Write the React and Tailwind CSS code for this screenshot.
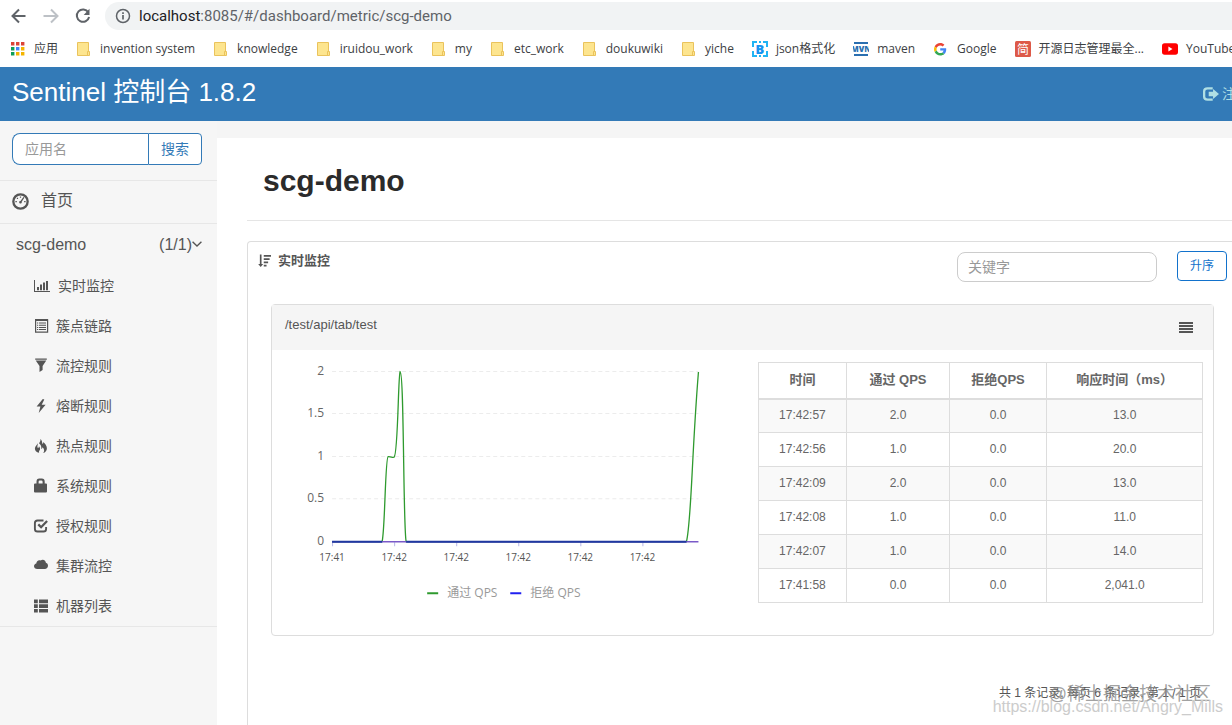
import React from 'react';

const carpeta = 'folder';

const marcadores = [
  { icono: 'apps', texto: '应用' },
  { icono: carpeta, texto: 'invention system' },
  { icono: carpeta, texto: 'knowledge' },
  { icono: carpeta, texto: 'iruidou_work' },
  { icono: carpeta, texto: 'my' },
  { icono: carpeta, texto: 'etc_work' },
  { icono: carpeta, texto: 'doukuwiki' },
  { icono: carpeta, texto: 'yiche' },
  { icono: 'json', texto: 'json格式化' },
  { icono: 'maven', texto: 'maven' },
  { icono: 'google', texto: 'Google' },
  { icono: 'jian', texto: '开源日志管理最全...' },
  { icono: 'youtube', texto: 'YouTube' },
];

const menu = [
  { icono: 'stats', texto: '实时监控', activo: true },
  { icono: 'list', texto: '簇点链路' },
  { icono: 'filter', texto: '流控规则' },
  { icono: 'flash', texto: '熔断规则' },
  { icono: 'fire', texto: '热点规则' },
  { icono: 'lock', texto: '系统规则' },
  { icono: 'check', texto: '授权规则' },
  { icono: 'cloud', texto: '集群流控' },
  { icono: 'thlist', texto: '机器列表' },
];

const metricas = [
  ['17:42:57', '2.0', '0.0', '13.0'],
  ['17:42:56', '1.0', '0.0', '20.0'],
  ['17:42:09', '2.0', '0.0', '13.0'],
  ['17:42:08', '1.0', '0.0', '11.0'],
  ['17:42:07', '1.0', '0.0', '14.0'],
  ['17:41:58', '0.0', '0.0', '2,041.0'],
];

const ejeY = [['2', 22], ['1.5', 64], ['1', 107], ['0.5', 149], ['0', 192]];
const ejeX = [['17:41', 60], ['17:42', 122], ['17:42', 184], ['17:42', 246], ['17:42', 308], ['17:42', 370]];

function IconoMarcador({ tipo }) {
  return (
    <svg className="w-4 h-4 shrink-0" viewBox="0 0 16 16" aria-hidden="true">
      {tipo === 'apps' && (
        <>
          <path fill="#db4437" d="M1 1h3.400v3.400H1zM6 1h3.400v3.400H6zM11 1h3.400v3.400H11z" />
          <path fill="#0f9d58" d="M1 6h3.400v3.400H1zM1 11h3.400v3.400H1z" />
          <path fill="#4285f4" d="M6 6h3.400v3.400H6z" />
          <path fill="#f4b400" d="M11 6h3.400v3.400H11zM6 11h3.400v3.400H6zM11 11h3.400v3.400H11z" />
        </>
      )}
      {tipo === 'folder' && (
        <>
          <path fill="#fde58f" stroke="#eac35c" d="M1.500 1.500h11v9h1v4h-12z" />
          <path fill="none" stroke="#eac35c" d="M11.500 14.500v-4h1.500" />
        </>
      )}
      {tipo === 'json' && (
        <>
          <path fill="none" stroke="#20b4f4" strokeWidth="2" d="M5 1H1v5M1 10v5h4M11 1h4v5M15 10v5h-4M7 1h2M7 15h2" />
          <text x="8" y="12.500" fontSize="13" fontWeight="800" fill="#1593f0" textAnchor="middle">B</text>
        </>
      )}
      {tipo === 'maven' && (
        <>
          <path fill="#2a6fb0" d="M1 1h14v2H1zM1 13h14v2H1z" />
          <text x="8" y="11" fontSize="8" fontWeight="800" fill="#2a6fb0" textAnchor="middle">MVN</text>
        </>
      )}
      {tipo === 'google' && (
        <g transform="translate(1 2) scale(.26)">
          <path fill="#EA4335" d="M24 9.500c3.540 0 6.710 1.220 9.210 3.600l6.850-6.850C35.900 2.380 30.470 0 24 0 14.620 0 6.510 5.380 2.560 13.220l7.980 6.190C12.430 13.720 17.740 9.500 24 9.500z" />
          <path fill="#4285F4" d="M46.980 24.550c0-1.570-.15-3.090-.38-4.550H24v9.020h12.940c-.58 2.960-2.260 5.480-4.780 7.180l7.730 6c4.510-4.180 7.090-10.360 7.090-17.650z" />
          <path fill="#FBBC05" d="M10.530 28.590c-.48-1.450-.76-2.990-.76-4.590s.27-3.140.76-4.590l-7.980-6.190C.92 16.460 0 20.120 0 24c0 3.880.92 7.540 2.560 10.780l7.970-6.190z" />
          <path fill="#34A853" d="M24 48c6.480 0 11.930-2.130 15.890-5.810l-7.730-6c-2.150 1.450-4.920 2.300-8.160 2.300-6.260 0-11.570-4.220-13.470-9.910l-7.980 6.190C6.510 42.620 14.620 48 24 48z" />
        </g>
      )}
      {tipo === 'jian' && (
        <>
          <rect width="16" height="16" rx="1.500" fill="#dd5948" />
          <text x="8" y="12.500" fontSize="12" fill="#fff" textAnchor="middle">简</text>
        </>
      )}
      {tipo === 'youtube' && (
        <>
          <rect y="2.300" width="16" height="11.400" rx="2.600" fill="#f00" />
          <path fill="#fff" d="M6.400 5.600v4.800L10.500 8z" />
        </>
      )}
    </svg>
  );
}

function Glifo({ tipo, className }) {
  return (
    <svg className={className} viewBox="0 0 14 14" fill="currentColor" aria-hidden="true">
      {tipo === 'dashboard' && (
        <>
          <circle cx="7" cy="7" r="5.900" fill="none" stroke="currentColor" strokeWidth="1.900" />
          <path d="M2.800 6.600h1.200v1H2.800zM10 6.600h1.200v1H10zM4 4h1v1H4zM6.500 2.900h1v1.100h-1zM9.400 3.300l.9.500-2.300 3.400a1.100 1.100 0 1 1-1-.7z" />
        </>
      )}
      {tipo === 'stats' && <path d="M0 1h1v11h15v1H0zM3 8h2v3.200H3zM6 5.500h2v5.700H6zM9 3.500h2v7.700H9zM12 2h2v9.200h-2z" />}
      {tipo === 'list' && (
        <>
          <path fill="none" stroke="currentColor" strokeWidth="1.200" d="M1.600.8h12v12.400h-12z" />
          <path d="M1 0h13v2H1zM3 3.500h1.200v1H3zM5 3.500h7v1H5zM3 5.700h1.200v1H3zM5 5.700h7v1H5zM3 7.900h1.200v1H3zM5 7.900h7v1H5zM3 10.100h1.200v1H3zM5 10.100h7v1H5z" />
        </>
      )}
      {tipo === 'filter' && <path d="M1.200-.5h11.600v1.300H1.200zM1.700 1.500h10.600L8.600 7v4L5.500 13V7z" />}
      {tipo === 'flash' && <path d="M8.800 0 2.600 7.600h3.800L4.700 14l6.900-8.300H7.700L10.300.6z" />}
      {tipo === 'fire' && (
        <>
          <path d="M6.300 0c2.600 2 1.300 3.900 2.500 4.900.5-.6.500-1.300.3-2 2 1.400 3.800 4 3.800 6.300 0 2.400-1.500 4.300-3.700 4.800 1.700-2.200 1-4.100-.7-5.800-.2 1-.7 1.500-1.300 1.700.5-2.300-.3-4.200-2.200-5.700C6 2.900 6.800 1.600 6.300 0z" />
          <path d="M3.600 4.200c.4 1.600-.3 2.600-.2 3.700.1.900.8 1.200 1.300.6.300-.4.300-1 .1-1.600 1.500 1.800 1.700 3.500.6 4.700-.5.600-.6 1.300-.3 2.200C2.300 13.200.9 11.600.9 9.400c0-2.300 2.300-3.200 2.700-5.200z" />
        </>
      )}
      {tipo === 'lock' && <path fillRule="evenodd" d="M1 4.500h1.500V2.700Q2.500-.5 5.300-.5h2.500q2.900 0 2.900 3.200v1.800H12q1 0 1 1V12.500q0 1-1 1H1q-1 0-1-1v-7q0-1 1-1zm3.600 0h4V2.700q0-1.300-1.200-1.300H5.800q-1.200 0-1.200 1.300z" />}
      {tipo === 'check' && (
        <>
          <path fill="none" stroke="currentColor" strokeWidth="1.900" d="M9.500 1.500h-6q-2.600 0-2.600 2.600v5.800q0 2.600 2.600 2.600h6q2.600 0 2.600-2.600V8" />
          <path fill="none" stroke="currentColor" strokeWidth="2.300" d="m4.300 5.400 2.800 2.800 6-6.200" />
        </>
      )}
      {tipo === 'cloud' && <path d="M3.200 10C1.400 10 0 8.800 0 7.300c0-1.400 1-2.400 2.300-2.700C2.400 2.500 3.700 1.200 5.400 1.200c.5 0 .9.100 1.300.3.400-.5 1.200-.8 2-.8 1.900 0 3.100 1.400 3.200 3.100 1.300.3 2.100 1.500 2.100 2.900 0 1.900-1.400 3.300-3.200 3.300z" />}
      {tipo === 'thlist' && <path d="M0 .5h3.800v3.700H0zM5 .5h9v3.700H5zM0 5.200h3.800v3.700H0zM5 5.200h9v3.700H5zM0 10h3.800v3.500H0zM5 10h9v3.500H5z" />}
      {tipo === 'sort' && <path d="M2 0h1.800v10.200h1.800L2.900 13.500.2 10.200H2zM6.200.5H14v1.900H6.200zM6.200 4h6.300v1.900H6.200zM6.200 7.500h4.700v1.900H6.200zM6.200 11h3v1.900h-3z" />}
      {tipo === 'justify' && <path d="M0 1h14v2H0zM0 4h14v2H0zM0 7h14v2H0zM0 10h14v2H0z" />}
      {tipo === 'logout' && (
        <>
          <path fill="none" stroke="currentColor" strokeWidth="2" d="M8.500 2H4Q1 2 1 4.500v5Q1 12 4 12h4.500" />
          <path d="M8.800 2.600 14 7l-5.200 4.400V9H5V5h3.800z" />
        </>
      )}
      {tipo === 'chevron' && <path fill="none" stroke="currentColor" strokeWidth="1.900" d="M.8 2.500 7 8.500l6.200-6" />}
    </svg>
  );
}

function BarraNavegador() {
  return (
    <div className="bg-white text-[#3c4043] font-['Open_Sans','Noto_Sans_CJK_SC',sans-serif] whitespace-nowrap">
      <div className="flex items-center h-8 pl-[11px]">
        <button type="button" aria-label="后退" className="mr-4 text-[#5f6368]">
          <svg className="w-4 h-4" viewBox="0 0 16 16" fill="none" stroke="currentColor" strokeWidth="2"><path d="M14.500 8H2M8 1.500 1.500 8 8 14.500" /></svg>
        </button>
        <button type="button" aria-label="前进" className="mr-4 text-[#bdc1c6]">
          <svg className="w-4 h-4" viewBox="0 0 16 16" fill="none" stroke="currentColor" strokeWidth="2"><path d="M.5 8H14M8 1.500 14.500 8 8 14.500" /></svg>
        </button>
        <button type="button" aria-label="重新加载" className="mr-[14px] text-[#5f6368]">
          <svg className="w-4 h-4" viewBox="0 0 16 16" fill="none" stroke="currentColor" strokeWidth="2"><path d="M13.300 4.300A6.200 6.200 0 1 0 14.100 9" /><path d="M14.500.8v6.200H8.700z" fill="currentColor" stroke="none" /></svg>
        </button>
        <div className="flex flex-1 items-center gap-2 h-7 pl-[10px] rounded-l-full bg-[#f1f3f4] text-[15px] font-['Roboto',sans-serif]">
          <svg className="w-4 h-4" viewBox="0 0 16 16" fill="none" stroke="#5f6368" strokeWidth="1.500"><circle cx="8" cy="8" r="6.500" /><path d="M8 7v4.500M8 4.300v1.600" strokeWidth="1.700" /></svg>
          <span className="text-[#5f6368]"><span className="text-[#202124]">localhost</span>:8085/#/dashboard/metric/scg-demo</span>
        </div>
      </div>
      <nav className="flex items-center h-[35px] pb-[2px] pl-[10px] gap-[18px] text-xs">
        {marcadores.map(m => (
          <a key={m.texto} href="#" className="flex items-center gap-2 shrink-0">
            <IconoMarcador tipo={m.icono} />
            {m.texto}
          </a>
        ))}
      </nav>
    </div>
  );
}

function Lateral() {
  return (
    <aside className="w-[217px] shrink-0 bg-[#f6f6f6] text-[#555]">
      <form className="flex h-8 mt-3 mx-3 mb-[15px] w-[190px] text-sm">
        <input type="text" aria-label="应用名" placeholder="应用名" className="flex-1 min-w-0 px-3 bg-white border border-r-0 border-[#337ab7] rounded-l-lg outline-none placeholder:text-[#999]" />
        <button type="button" className="px-3 bg-white border border-[#337ab7] rounded-r text-[#337ab7]">搜索</button>
      </form>
      <a href="#" className="flex items-center gap-3 h-11 pl-3 pb-[2px] border-y border-[#e7e7e7] text-base">
        <Glifo tipo="dashboard" className="w-[17px] h-[17px]" />
        首页
      </a>
      <a href="#" className="flex items-center h-[42px] pl-4 pr-[15px] text-base">
        <span className="flex-1">scg-demo</span>
        (1/1)
        <Glifo tipo="chevron" className="w-[10px] h-[10px]" />
      </a>
      <ul className="border-b border-[#e7e7e7] text-sm">
        {menu.map(m => (
          <li key={m.texto}>
            <a href="#" className={m.activo ? 'flex items-center gap-[10px] h-10 pl-[34px]' : 'flex items-center gap-2 h-10 pl-[34px]'}>
              <Glifo tipo={m.icono} className="w-[14px] h-[14px] overflow-visible" />
              {m.texto}
            </a>
          </li>
        ))}
      </ul>
    </aside>
  );
}

function Grafica() {
  return (
    <svg className="w-full font-['Open_Sans','Noto_Sans_CJK_SC',sans-serif]" viewBox="0 0 470 270" role="img" aria-label="QPS">
      {ejeY.map(([t, y]) => (
        <g key={t}>
          <text x="52" y={y + 3} fontSize="12" fill="#666" textAnchor="end">{t}</text>
          {t !== '0' && <path d={`M60 ${y - 0.5}H426`} stroke="#ececec" strokeDasharray="4 3" />}
        </g>
      ))}
      {ejeX.map(([t, x]) => (
        <g key={x}>
          <path d={`M${x + 0.5} 192v4`} stroke="#b8b8e8" />
          <text x={x} y="211" fontSize="10" fill="#555" textAnchor="middle">{t}</text>
        </g>
      ))}
      <path d="M60 191.500H110C113 178 113 108 116 106.500C118 106 121 108 122 107C126 104 126 24 128 21.500C132 22 131 178 134 191.500H414C419 172 419 108 426 22" fill="none" stroke="#2e9a2e" strokeWidth="1.300" />
      <path d="M60 191.500H426" stroke="#7a5ac8" strokeWidth="1.600" />
      <path d="M60 191.500H110M134 191.500H414" stroke="#2038a0" strokeWidth="2" />
      <path d="M155 243h11" stroke="#2e9a2e" strokeWidth="2" />
      <text x="175" y="247" fontSize="12" fill="#999">通过 QPS</text>
      <path d="M238 243h11" stroke="#2020f0" strokeWidth="2" />
      <text x="258" y="247" fontSize="12" fill="#999">拒绝 QPS</text>
    </svg>
  );
}

function TablaMetricas() {
  return (
    <table className="w-full table-fixed border-collapse border border-[#ddd] text-center text-xs text-[#666]">
      <thead>
        <tr className="h-9 text-[13px]">
          <th className="w-[20%] pb-[2px] border border-b-2 border-[#ddd]">时间</th>
          <th className="w-[23%] pb-[2px] border border-b-2 border-[#ddd]">通过 QPS</th>
          <th className="w-[22%] pb-[2px] border border-b-2 border-[#ddd]">拒绝QPS</th>
          <th className="pb-[2px] border border-b-2 border-[#ddd]">响应时间（ms）</th>
        </tr>
      </thead>
      <tbody>
        {metricas.map(fila => (
          <tr key={fila[0]} className="h-[34px] odd:bg-[#f9f9f9]">
            {fila.map((v, i) => (<td key={i} className="pb-[2px] border border-[#ddd]">{v}</td>))}
          </tr>
        ))}
      </tbody>
    </table>
  );
}

export default function App() {
  return (
    <div className="h-screen overflow-hidden bg-[#f5f5f5] font-['Liberation_Sans','Noto_Sans_CJK_SC',sans-serif]">
      <div className="flex flex-col min-h-full -mr-6">
        <BarraNavegador />

        <header className="flex items-center justify-between h-[54px] pl-3 pr-[6px] bg-[#337ab7]">
          <h1 className="pb-1 text-[26px] text-white">Sentinel 控制台 1.8.2</h1>
          <a href="#" className="flex items-center gap-[3px] text-sm text-[#b0dfe4]">
            <Glifo tipo="logout" className="w-4 h-4" />
            注销
          </a>
        </header>

        <div className="flex flex-1">
          <Lateral />

          <main className="flex flex-col flex-1 mt-[17px] pl-[30px] bg-white">
            <h2 className="px-4 h-[83px] pt-5 border-b border-[#e5e5e5] text-[30px] leading-[46px] font-bold text-[#2b2b2b]">scg-demo</h2>

            <section className="flex flex-col flex-1 mt-5 mr-[18px] border border-b-0 border-[#ddd] rounded-t text-[#555]">
              <div className="flex items-start h-[62px] px-[10px] pt-[9px]">
                <h3 className="flex flex-1 items-center gap-[7px] text-[13px] font-bold">
                  <Glifo tipo="sort" className="w-[13px] h-[14px]" />
                  实时监控
                </h3>
                <input type="text" aria-label="关键字" placeholder="关键字" className="w-[200px] h-[30px] mt-px mr-5 px-[10px] border border-[#ccc] rounded-lg text-sm outline-none placeholder:text-[#999]" />
                <button type="button" className="w-[50px] h-[30px] border border-[#1272cc] rounded text-xs text-[#1272cc]">升序</button>
              </div>

              <article className="mx-[23px] border border-[#ddd] rounded">
                <div className="flex items-center justify-between h-[45px] pl-[13px] pr-5 bg-[#f5f5f5]">
                  <span className="pb-[5px] text-[13px]">/test/api/tab/test</span>
                  <button type="button" aria-label="列表"><Glifo tipo="justify" className="w-[14px] h-[14px]" /></button>
                </div>
                <div className="flex pb-[15px]">
                  <div className="w-1/2"><Grafica /></div>
                  <div className="w-1/2 pt-3 pl-[15px] pr-[10px]"><TablaMetricas /></div>
                </div>
              </article>

              <div className="relative mt-[49px] mr-9 text-right text-xs leading-4">
                共 1 条记录, 每页 6 条记录, 第 1 / 1 页
                <span className="absolute -top-[3px] -right-[10px] text-lg leading-6 text-[#888]/80 whitespace-nowrap">@稀土掘金技术社区</span>
                <span className="absolute top-[14px] -right-[22px] text-base leading-4 text-[#ccc] whitespace-nowrap">https://blog.csdn.net/Angry_Mills</span>
              </div>
            </section>
          </main>
        </div>
      </div>
    </div>
  );
}
